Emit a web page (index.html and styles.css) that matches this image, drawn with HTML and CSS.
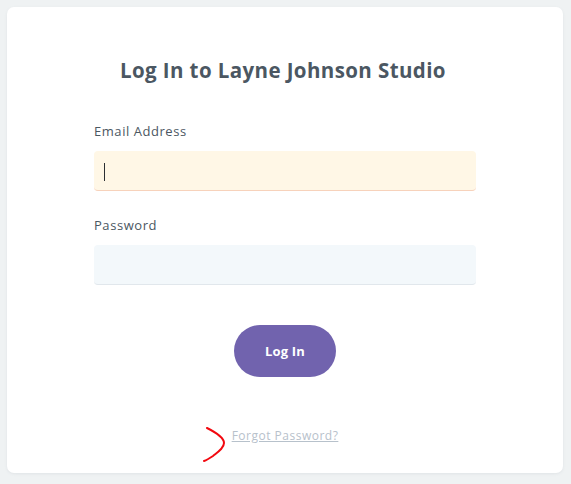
FILE: index.html
```html
<!DOCTYPE html>
<html lang="en">
<head>
<meta charset="utf-8">
<title>Log In to Layne Johnson Studio</title>
<link rel="stylesheet" href="styles.css">
</head>
<body>
<main class="card">
  <h1 class="title">Log In to Layne Johnson Studio</h1>
  <form class="form">
    <label class="label" for="email">Email Address</label>
    <div class="field-wrap">
      <input class="field field-active" id="email" type="email">
      <span class="caret"></span>
    </div>
    <label class="label label-pw" for="password">Password</label>
    <div class="field-wrap">
      <input class="field" id="password" type="password">
    </div>
    <div class="actions">
      <button class="btn" type="button">Log In</button>
    </div>
    <div class="forgot-row">
      <a class="forgot" href="#">Forgot Password?
        <svg class="scribble" width="24" height="36" viewBox="0 0 24 36" aria-hidden="true">
          <path d="M4 1 C 12 5, 21 10, 21 16 C 21 21, 15 25, 10 29 C 7 31, 4 33, 1 34" fill="none" stroke="#f2080f" stroke-width="2" stroke-linecap="round"/>
        </svg>
      </a>
    </div>
  </form>
</main>
</body>
</html>
```
FILE: styles.css
```css
html, body {
  margin: 0;
  padding: 0;
}
body {
  background: #eff2f3;
  font-family: "Open Sans", "Noto Sans", sans-serif;
  padding: 7px 8px 11px 7px;
}
.card {
  background: #ffffff;
  border-radius: 7px;
  height: 466px;
  box-sizing: border-box;
  padding-top: 49px;
  box-shadow: 0 1px 3px rgba(120, 135, 150, 0.12);
}
.title {
  margin: 0;
  text-align: center;
  font-size: 20.5px;
  line-height: 28px;
  font-weight: 700;
  color: #4b5762;
  letter-spacing: 0.4px;
  padding-right: 4px;
}
.form {
  width: 382px;
  margin: 37px auto 0;
  display: flex;
  flex-direction: column;
}
.label {
  display: block;
  font-size: 13px;
  line-height: 20px;
  color: #4b5762;
  letter-spacing: 0.55px;
  margin-bottom: 10px;
}
.label-pw {
  margin-top: 24px;
}
.field-wrap {
  position: relative;
}
.field {
  display: block;
  width: 100%;
  height: 40px;
  box-sizing: border-box;
  border: none;
  border-bottom: 1px solid #e1e7ec;
  border-radius: 4px;
  background: #f3f8fb;
  outline: none;
  padding: 0 10px;
  font-family: inherit;
  font-size: 14px;
}
.field-active {
  background: #fff7e6;
  border-bottom-color: #f7d2bb;
}
.caret {
  position: absolute;
  left: 10px;
  top: 12px;
  width: 1px;
  height: 18px;
  background: #2b2f33;
}
.actions {
  display: flex;
  justify-content: center;
  margin-top: 40px;
}
.btn {
  width: 102px;
  height: 52px;
  border: none;
  border-radius: 26px;
  background: #7163ae;
  color: #ffffff;
  font-family: inherit;
  font-size: 13px;
  font-weight: 700;
  letter-spacing: 0.2px;
  cursor: pointer;
}
.forgot-row {
  display: flex;
  justify-content: center;
  margin-top: 50px;
}
.forgot {
  position: relative;
  font-size: 12px;
  line-height: 18px;
  color: #b7c1cb;
  text-decoration: underline;
  letter-spacing: 0.5px;
}
.scribble {
  position: absolute;
  left: -29px;
  top: 0;
}
```
